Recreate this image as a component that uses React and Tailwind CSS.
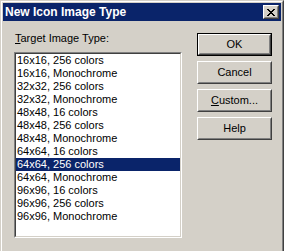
const items = [
  "16x16, 256 colors",
  "16x16, Monochrome",
  "32x32, 256 colors",
  "32x32, Monochrome",
  "48x48, 16 colors",
  "48x48, 256 colors",
  "48x48, Monochrome",
  "64x64, 16 colors",
  "64x64, 256 colors",
  "64x64, Monochrome",
  "96x96, 16 colors",
  "96x96, 256 colors",
  "96x96, Monochrome",
];

const selected = 8;

const Button = ({ children, isDefault }) => (
  <div className={`w-[75px] h-[23px] ${isDefault ? "border border-black" : ""}`}>
    <div className="w-full h-full border border-t-white border-l-white border-r-[#404040] border-b-[#404040]">
      <div className="w-full h-full flex items-center justify-center border border-t-[#d4d0c8] border-l-[#d4d0c8] border-r-[#808080] border-b-[#808080] text-black">
        {children}
      </div>
    </div>
  </div>
);

export default function App() {
  return (
    <div
      className="w-[284px] h-[251px] overflow-hidden bg-[#d4d0c8] text-[11px] leading-[13px]"
      style={{ fontFamily: '"Liberation Sans", Arial, sans-serif' }}
    >
      <div className="h-[260px] border border-t-[#d4d0c8] border-l-[#d4d0c8] border-r-[#404040] border-b-[#404040]">
        <div className="h-full p-px border border-t-white border-l-white border-r-[#808080] border-b-[#808080]">
          {/* Title bar */}
          <div className="h-[18px] bg-[#0a246a] flex items-center pl-[2px] pr-[2px]">
            <span className="text-white font-bold text-[12px] leading-[14px]">New Icon Image Type</span>
            <div className="ml-auto w-[16px] h-[14px] border border-t-white border-l-white border-r-[#404040] border-b-[#404040] bg-[#d4d0c8]">
              <div className="w-full h-full flex items-center justify-center border border-t-[#d4d0c8] border-l-[#d4d0c8] border-r-[#808080] border-b-[#808080]">
                <svg width="8" height="7" viewBox="0 0 8 7" shapeRendering="crispEdges">
                  <path d="M0 0h2v1h-2zM6 0h2v1h-2zM1 1h2v1h-2zM5 1h2v1h-2zM2 2h4v1h-4zM3 3h2v1h-2zM2 4h4v1h-4zM1 5h2v1h-2zM5 5h2v1h-2zM0 6h2v1h-2zM6 6h2v1h-2z" fill="#000" />
                </svg>
              </div>
            </div>
          </div>

          {/* Body */}
          <div className="flex pl-[11px] pt-[11px]">
            <div className="flex flex-col">
              <div className="text-black pl-px">
                <span className="underline">T</span>arget Image Type:
              </div>
              <div className="mt-[7px] w-[168px] h-[186px] border border-t-[#808080] border-l-[#808080] border-r-white border-b-white">
                <div className="w-full h-full bg-white border border-t-[#404040] border-l-[#404040] border-r-[#d4d0c8] border-b-[#d4d0c8]">
                  {items.map((item, i) => (
                    <div
                      key={item}
                      className={`h-[13px] pl-px whitespace-nowrap ${
                        i === selected ? "bg-[#0a246a] text-white" : "text-black"
                      }`}
                    >
                      {item}
                    </div>
                  ))}
                </div>
              </div>
            </div>

            <div className="ml-[15px] pt-px flex flex-col gap-[5px]">
              <Button isDefault>OK</Button>
              <Button>Cancel</Button>
              <Button>
                <span className="underline">C</span>ustom...
              </Button>
              <Button>Help</Button>
            </div>
          </div>
        </div>
      </div>
    </div>
  );
}
